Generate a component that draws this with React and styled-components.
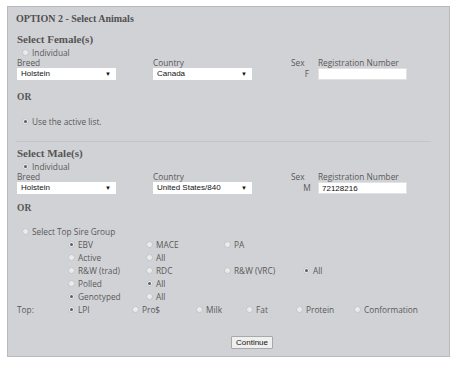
import React from "react";
import styled, { createGlobalStyle } from "styled-components";

const GlobalStyle = createGlobalStyle`
  html, body {
    margin: 0;
    background: #ffffff;
  }
  body {
    font-family: "Open Sans", "Liberation Sans", sans-serif;
  }
`;

const Panel = styled.section`
  box-sizing: border-box;
  width: 443px;
  height: 351px;
  margin: 6px 0 0 7px;
  padding: 5px 8px 0 9px;
  background: #d1d2d5;
  border: 1px solid #b9babd;
  color: #595959;
  font-size: 8.3px;
`;

const Title = styled.h1`
  margin: 0 0 0 -1px;
  font-family: "Liberation Serif", serif;
  font-weight: bold;
  font-size: 10px;
  line-height: 14px;
  color: #505050;
`;

const Heading = styled.h2`
  margin: ${(p) => p.$top}px 0 0 0;
  font-family: "Liberation Serif", serif;
  font-weight: bold;
  font-size: 11px;
  line-height: 14px;
  color: #555;
`;

const Or = styled.div`
  margin-top: ${(p) => p.$top}px;
  font-family: "Liberation Serif", serif;
  font-weight: bold;
  font-size: 9.5px;
  line-height: 14px;
  color: #555;
`;

const Radio = styled.span`
  position: relative;
  box-sizing: border-box;
  flex: none;
  width: 7px;
  height: 7px;
  border-radius: 50%;
  background: #eaebed;
  border: 1px solid #c4c5c8;

  &::after {
    content: "";
    display: ${(p) => (p.$checked ? "block" : "none")};
    position: absolute;
    left: 1px;
    top: 1px;
    width: 3px;
    height: 3px;
    border-radius: 50%;
    background: #5e5e5e;
  }
`;

const RadioLine = styled.label`
  display: flex;
  align-items: center;
  gap: 3.5px;
  height: ${(p) => p.$h || 12}px;
  margin-top: ${(p) => p.$top || 0}px;
  padding-left: 4.5px;
  white-space: nowrap;
`;

const Fields = styled.div`
  display: grid;
  grid-template-columns: 136px 138px 27px 89px;
  grid-template-rows: 9px 12px;
  row-gap: 1px;
  line-height: 9px;
`;

const SexValue = styled.div`
  line-height: 12px;
  text-align: center;
  padding-left: 5px;
`;

const SelectBox = styled.div`
  position: relative;
  box-sizing: border-box;
  width: 99px;
  height: 12px;
  padding-left: 4px;
  background: #ffffff;
  font-family: "Liberation Sans", Arial, sans-serif;
  font-size: 8px;
  line-height: 12px;
  color: #111;
`;

const Arrow = styled.span`
  position: absolute;
  right: 5px;
  top: 0;
  font-size: 6px;
  line-height: 12px;
  color: #111;
`;

const RegInput = styled.input`
  box-sizing: border-box;
  width: 89px;
  height: 12px;
  margin: 0;
  padding: 0 0 0 3px;
  border: 1px solid #e2e2e2;
  background: #ffffff;
  font-family: "Liberation Sans", Arial, sans-serif;
  font-size: 8px;
  color: #111;
  outline: none;
`;

const Rule = styled.hr`
  width: 415px;
  margin: 13.5px 0 0 -1px;
  border: 0;
  border-top: 1px solid #c3c4c7;
`;

const Group = styled.div`
  display: grid;
  grid-template-columns: 50.5px 78px 78px 79px 1fr;
  grid-auto-rows: 13px;
`;

const GroupOption = styled.label`
  grid-column: ${(p) => p.$col};
  display: flex;
  align-items: center;
  gap: 3.5px;
  white-space: nowrap;
`;

const TopRow = styled.div`
  display: flex;
  align-items: center;
  height: 13px;
`;

const TopLabel = styled.span`
  width: 50.5px;
  flex: none;
`;

const TopOption = styled.label`
  display: flex;
  align-items: center;
  gap: 3.5px;
  width: ${(p) => (p.$w ? `${p.$w}px` : "auto")};
  flex: none;
  white-space: nowrap;
`;

const Button = styled.button`
  display: block;
  box-sizing: border-box;
  width: 42px;
  height: 13px;
  margin: 20.5px 0 0 214px;
  padding: 0;
  background: #efefef;
  border: 1px solid #a8a8a8;
  border-radius: 1px;
  font-family: "Liberation Sans", Arial, sans-serif;
  font-size: 8px;
  line-height: 11px;
  color: #111;
`;

function Select({ value }) {
  return (
    <SelectBox>
      {value}
      <Arrow>▼</Arrow>
    </SelectBox>
  );
}

function AnimalFields({ country, sex, reg }) {
  return (
    <Fields>
      <span>Breed</span>
      <span>Country</span>
      <span>Sex</span>
      <span>Registration Number</span>
      <Select value="Holstein" />
      <Select value={country} />
      <SexValue>{sex}</SexValue>
      <RegInput defaultValue={reg} />
    </Fields>
  );
}

const groupRows = [
  [["EBV", 2, true], ["MACE", 3], ["PA", 4]],
  [["Active", 2], ["All", 3]],
  [["R&W (trad)", 2], ["RDC", 3], ["R&W (VRC)", 4], ["All", 5, true]],
  [["Polled", 2], ["All", 3, true]],
  [["Genotyped", 2, true], ["All", 3]],
];

const topTraits = [
  ["LPI", 64, true],
  ["Pro$", 64],
  ["Milk", 50],
  ["Fat", 50],
  ["Protein", 58],
  ["Conformation"],
];

export default function App() {
  return (
    <>
      <GlobalStyle />
      <Panel>
        <Title>OPTION 2 - Select Animals</Title>

        <Heading $top={6}>Select Female(s)</Heading>
        <RadioLine>
          <Radio />
          Individual
        </RadioLine>
        <AnimalFields country="Canada" sex="F" reg="" />
        <Or $top={10}>OR</Or>
        <RadioLine $h={13} $top={10.5}>
          <Radio $checked />
          Use the active list.
        </RadioLine>

        <Rule />

        <Heading $top={4}>Select Male(s)</Heading>
        <RadioLine>
          <Radio $checked />
          Individual
        </RadioLine>
        <AnimalFields country="United States/840" sex="M" reg="72128216" />
        <Or $top={7}>OR</Or>
        <RadioLine $h={13} $top={9.5}>
          <Radio />
          Select Top Sire Group
        </RadioLine>

        <Group>
          {groupRows.flat().map(([label, col, checked], i) => (
            <GroupOption key={i} $col={col}>
              <Radio $checked={checked} />
              {label}
            </GroupOption>
          ))}
        </Group>
        <TopRow>
          <TopLabel>Top:</TopLabel>
          {topTraits.map(([label, w, checked]) => (
            <TopOption key={label} $w={w}>
              <Radio $checked={checked} />
              {label}
            </TopOption>
          ))}
        </TopRow>

        <Button>Continue</Button>
      </Panel>
    </>
  );
}
